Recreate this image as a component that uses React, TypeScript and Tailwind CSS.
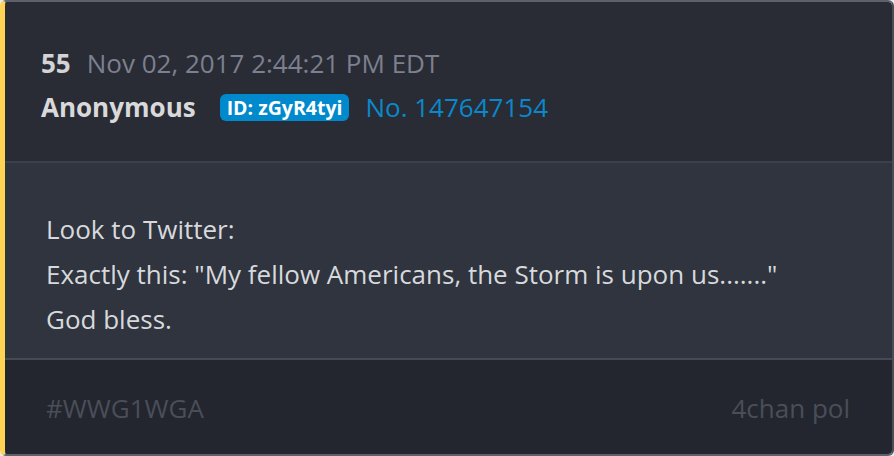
export default function App() {
  return (
    <div className="h-[456px] w-[894px] bg-[#e9eaec]">
      <div className="flex h-[456px] w-[894px] flex-col overflow-hidden rounded-[6px] border-t-2 border-r-2 border-b-2 border-l-[5px] border-t-[#5d616b] border-r-[#4a4e58] border-b-[#5d616b] border-l-[#ffd454] font-['Open_Sans',sans-serif]">
        <div className="flex h-[159px] flex-col bg-[#292c34] pt-[39px] pl-[36px]">
          <div className="flex items-center gap-[16px] text-[26px] leading-[44px]">
            <span className="font-bold text-[#d4d4d6]">55</span>
            <span className="text-[#7c8090]">Nov 02, 2017 2:44:21 PM EDT</span>
          </div>
          <div className="flex items-center text-[26px] leading-[44px]">
            <span className="font-bold text-[#d9d9db]">Anonymous</span>
            <span className="ml-[24px] rounded-[6px] bg-[#0089cc] px-[7px] text-[19.5px] leading-[27px] font-bold text-white">
              ID: zGyR4tyi
            </span>
            <span className="ml-[16px] text-[#0a88cb]">No. 147647154</span>
          </div>
        </div>
        <div className="h-[2px] bg-[#3c404a]" />
        <div className="flex h-[195px] flex-col bg-[#2f343e] pt-[44px] pl-[41px] text-[26px] leading-[45px] text-[#d7d9dd]">
          <p>Look to Twitter:</p>
          <p>Exactly this: "My fellow Americans, the Storm is upon us......."</p>
          <p>God bless.</p>
        </div>
        <div className="h-[2px] bg-[#464a54]" />
        <div className="flex flex-1 items-center justify-between bg-[#23262e] pt-[3px] pr-[42px] pl-[41px] text-[26px] text-[#4a4e59]">
          <span>#WWG1WGA</span>
          <span>4chan pol</span>
        </div>
      </div>
    </div>
  )
}
